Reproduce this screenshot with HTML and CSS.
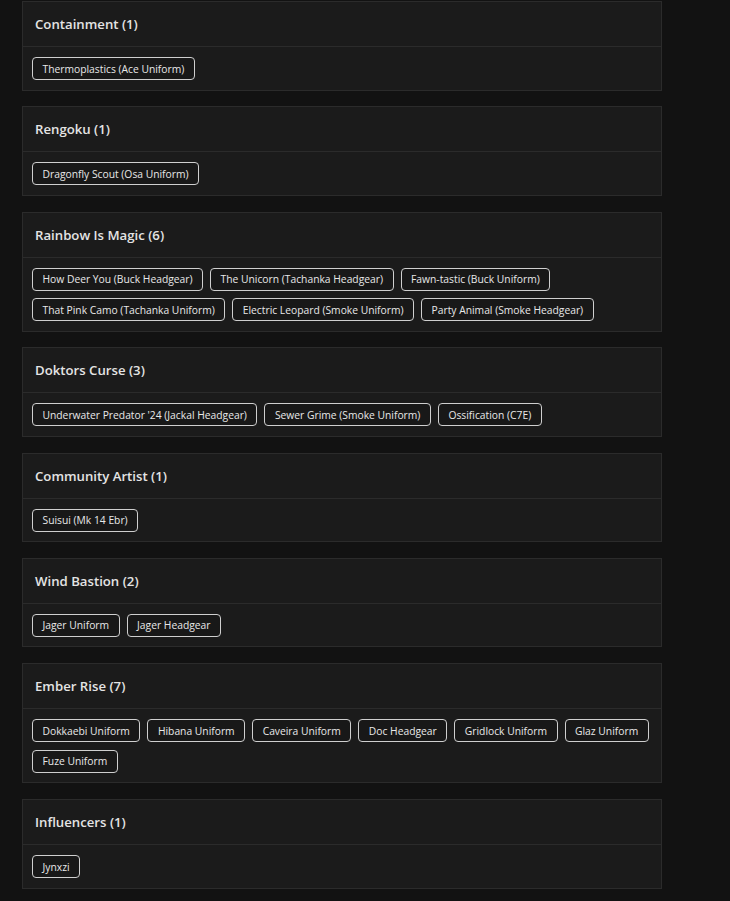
FILE: index.html
```html
<!DOCTYPE html>
<html>
<head>
<meta charset="utf-8">
<link rel="stylesheet" href="styles.css">
</head>
<body>
<div class="list">
  <section class="card">
    <div class="card-head">Containment (1)</div>
    <div class="card-body">
      <span class="chip">Thermoplastics (Ace Uniform)</span>
    </div>
  </section>
  <section class="card">
    <div class="card-head">Rengoku (1)</div>
    <div class="card-body">
      <span class="chip">Dragonfly Scout (Osa Uniform)</span>
    </div>
  </section>
  <section class="card">
    <div class="card-head">Rainbow Is Magic (6)</div>
    <div class="card-body">
      <span class="chip">How Deer You (Buck Headgear)</span>
      <span class="chip">The Unicorn (Tachanka Headgear)</span>
      <span class="chip">Fawn-tastic (Buck Uniform)</span>
      <span class="chip">That Pink Camo (Tachanka Uniform)</span>
      <span class="chip">Electric Leopard (Smoke Uniform)</span>
      <span class="chip">Party Animal (Smoke Headgear)</span>
    </div>
  </section>
  <section class="card">
    <div class="card-head">Doktors Curse (3)</div>
    <div class="card-body">
      <span class="chip">Underwater Predator '24 (Jackal Headgear)</span>
      <span class="chip">Sewer Grime (Smoke Uniform)</span>
      <span class="chip">Ossification (C7E)</span>
    </div>
  </section>
  <section class="card">
    <div class="card-head">Community Artist (1)</div>
    <div class="card-body">
      <span class="chip">Suisui (Mk 14 Ebr)</span>
    </div>
  </section>
  <section class="card">
    <div class="card-head">Wind Bastion (2)</div>
    <div class="card-body">
      <span class="chip">Jager Uniform</span>
      <span class="chip">Jager Headgear</span>
    </div>
  </section>
  <section class="card">
    <div class="card-head">Ember Rise (7)</div>
    <div class="card-body">
      <span class="chip">Dokkaebi Uniform</span>
      <span class="chip">Hibana Uniform</span>
      <span class="chip">Caveira Uniform</span>
      <span class="chip">Doc Headgear</span>
      <span class="chip">Gridlock Uniform</span>
      <span class="chip">Glaz Uniform</span>
      <span class="chip">Fuze Uniform</span>
    </div>
  </section>
  <section class="card">
    <div class="card-head">Influencers (1)</div>
    <div class="card-body">
      <span class="chip">Jynxzi</span>
    </div>
  </section>
</div>
</body>
</html>
```
FILE: styles.css
```css
html, body {
  margin: 0;
  padding: 0;
  background: #121212;
}
body {
  font-family: "Open Sans", "Liberation Sans", sans-serif;
  color: #e6e6e6;
}
.list {
  width: 640px;
  margin: 1px 0 0 22px;
  display: flex;
  flex-direction: column;
  gap: 15.8px;
}
.card {
  background: #1b1b1b;
  border: 1px solid #2b2b2b;
}
.card-head {
  height: 45px;
  box-sizing: border-box;
  padding: 0 12px;
  display: flex;
  align-items: center;
  font-size: 13.2px;
  font-weight: 600;
  color: #e4e4e4;
  border-bottom: 1px solid #2b2b2b;
}
.card-body {
  padding: 10px 9px 9.5px;
  display: flex;
  flex-wrap: wrap;
  gap: 7.5px 7px;
}
.chip {
  height: 23px;
  box-sizing: border-box;
  padding: 0 9.5px;
  display: inline-flex;
  align-items: center;
  border: 1px solid #cfcfcf;
  border-radius: 4px;
  background: #181818;
  font-size: 10.3px;
  color: #e8e8e8;
  white-space: nowrap;
}
```
